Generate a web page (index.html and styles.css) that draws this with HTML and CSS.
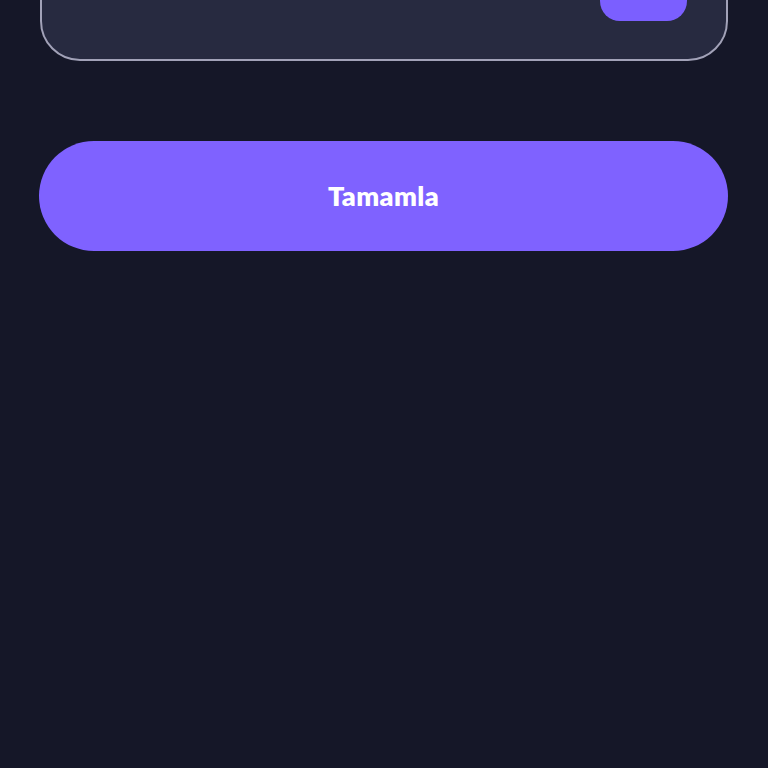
FILE: index.html
```html
<!DOCTYPE html>
<html lang="tr">
<head>
<meta charset="utf-8">
<title>Tamamla</title>
<link rel="stylesheet" href="styles.css">
</head>
<body>
<main class="page">
  <section class="card">
    <div class="card-row">
      <button class="pill" type="button" aria-label="Ekle"></button>
    </div>
  </section>
  <button class="primary" type="button">Tamamla</button>
</main>
</body>
</html>
```
FILE: styles.css
```css
html, body {
  margin: 0;
  padding: 0;
  background: #151728;
  height: 100%;
  overflow: hidden;
}
.page {
  display: flex;
  flex-direction: column;
  padding: 0 40px 0 39px;
  font-family: Lato, "Noto Sans", sans-serif;
}
.card {
  margin-top: -76px;
  margin-left: 1px;
  background: #272a40;
  border: 2px solid #a2a2b8;
  border-radius: 40px;
  padding: 39px 39px 38px 40px;
}
.card-row {
  display: flex;
  justify-content: flex-end;
}
.pill {
  width: 87px;
  height: 56px;
  border: none;
  border-radius: 20px;
  background: #7b5fff;
}
.primary {
  margin-top: 80px;
  height: 110px;
  border: none;
  border-radius: 55px;
  background: #7f62ff;
  color: #ffffff;
  font-family: Lato, "Noto Sans", sans-serif;
  font-weight: 800;
  font-size: 27px;
  letter-spacing: 0.4px;
  padding-bottom: 2px;
}
```
